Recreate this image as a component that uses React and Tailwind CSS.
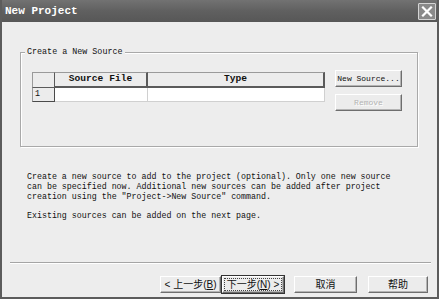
import React from "react";

const mono = { fontFamily: '"Liberation Mono", "DejaVu Sans Mono", monospace' };
const cjk = { fontFamily: '"Liberation Sans", "Noto Sans CJK SC", sans-serif' };

function Btn({ children, className = "", disabled = false, def = false, style }) {
  return (
    <div
      className={
        "flex items-center justify-center h-[17px] bg-[#ececec] border border-t-white border-l-white border-r-[#6e6e6e] border-b-[#6e6e6e] shadow-[inset_-1px_-1px_0_#b4b4b4] " +
        (def ? "outline outline-1 outline-[#333] " : "") +
        (disabled ? "text-[#b2b2b2] [text-shadow:1px_1px_0_#fff] " : "text-[#111] ") +
        className
      }
      style={style}
    >
      {children}
    </div>
  );
}

export default function App() {
  return (
    <div className="w-[439px] h-[299px] bg-[#5c5c5c] flex flex-col px-[2px] pb-[2px]">
      {/* title bar */}
      <div className="h-[22px] flex items-center justify-between pl-[3px] pr-[1px] bg-gradient-to-b from-[#727272] via-[#606060] to-[#575757]">
        <span className="text-white font-bold text-[11px] leading-none" style={mono}>
          New Project
        </span>
        <div className="w-[18px] h-[17px] border border-[#d4d4d4] bg-[#8a8a8a] flex items-center justify-center rounded-[1px]">
          <svg width="12" height="11" viewBox="0 0 12 11">
            <path d="M2 1.5 L10 9.5 M10 1.5 L2 9.5" stroke="#fff" strokeWidth="2.2" strokeLinecap="square" />
          </svg>
        </div>
      </div>

      {/* body */}
      <div className="flex-1 bg-[#ededed] flex flex-col">
        {/* group box */}
        <div className="relative mt-[30px] ml-[18px] mr-[19px] h-[95px] border border-[#a9a9a9] shadow-[inset_1px_1px_0_#fff,1px_1px_0_#fff]">
          <span
            className="absolute left-[4px] -top-[6px] px-[2px] bg-[#ededed] text-[8.4px] leading-[10px] text-[#111]"
            style={mono}
          >
            Create a New Source
          </span>
          <div className="flex mt-[19px] ml-[11px]">
            {/* table */}
            <div className="flex flex-col w-[293px]">
              <div className="flex h-[16px]">
                <div className="w-[23px] bg-[#ececec] border border-[#9a9a9a] border-r-[#5a5a5a] border-b-[#5a5a5a]" />
                <div
                  className="w-[93px] bg-[#ececec] border-t border-[#9a9a9a] border-r-2 border-b-2 border-r-[#5a5a5a] border-b-[#5a5a5a] flex items-center justify-center font-bold text-[9.6px] text-[#111]"
                  style={mono}
                >
                  Source File
                </div>
                <div
                  className="flex-1 bg-[#ececec] border-t border-[#9a9a9a] border-r-2 border-b-2 border-r-[#5a5a5a] border-b-[#5a5a5a] flex items-center justify-center font-bold text-[9.6px] text-[#111]"
                  style={mono}
                >
                  Type
                </div>
              </div>
              <div className="flex h-[14px]">
                <div
                  className="w-[23px] bg-[#ececec] border-l border-[#9a9a9a] border-r border-b border-r-[#4a4a4a] border-b-[#4a4a4a] text-[8.4px] leading-[12px] pl-[2px] text-[#111]"
                  style={mono}
                >
                  1
                </div>
                <div className="w-[93px] bg-white border-r border-b border-[#d0d0d0]" />
                <div className="flex-1 bg-white border-r border-b border-[#d0d0d0]" />
              </div>
            </div>
            {/* buttons */}
            <div className="flex flex-col ml-[10px] -mt-[2px] gap-[7px]">
              <Btn className="w-[67px] text-[8px]" style={mono}>New Source...</Btn>
              <Btn className="w-[67px] text-[8px]" style={mono} disabled>
                Remove
              </Btn>
            </div>
          </div>
        </div>

        {/* description */}
        <div className="mt-[25px] ml-[25px] text-[8.3px] leading-[10px] text-[#111] whitespace-pre" style={mono}>
          <div>Create a new source to add to the project (optional). Only one new source</div>
          <div>can be specified now. Additional new sources can be added after project</div>
          <div>creation using the "Project-&gt;New Source" command.</div>
          <div className="mt-[9px]">Existing sources can be added on the next page.</div>
        </div>

        <div className="flex-1" />

        {/* separator */}
        <div className="ml-[8px] mr-[6px] h-[2px] border-t border-[#a5a5a5] border-b border-b-white" />

        {/* bottom buttons */}
        <div className="flex justify-end mt-[12px] mb-[4px] mr-[9px] text-[10px]" style={cjk}>
          <Btn className="w-[61px] whitespace-pre">{"< 上一步("}<u>B</u>)</Btn>
          <Btn className="w-[62px] ml-[1px]" def>
            <span className="border border-dotted border-[#444] px-[2px] leading-[11px] whitespace-pre">
              下一步(<u>N</u>){" >"}
            </span>
          </Btn>
          <Btn className="w-[63px] ml-[10px]">取消</Btn>
          <Btn className="w-[60px] ml-[11px]">帮助</Btn>
        </div>
      </div>
    </div>
  );
}
